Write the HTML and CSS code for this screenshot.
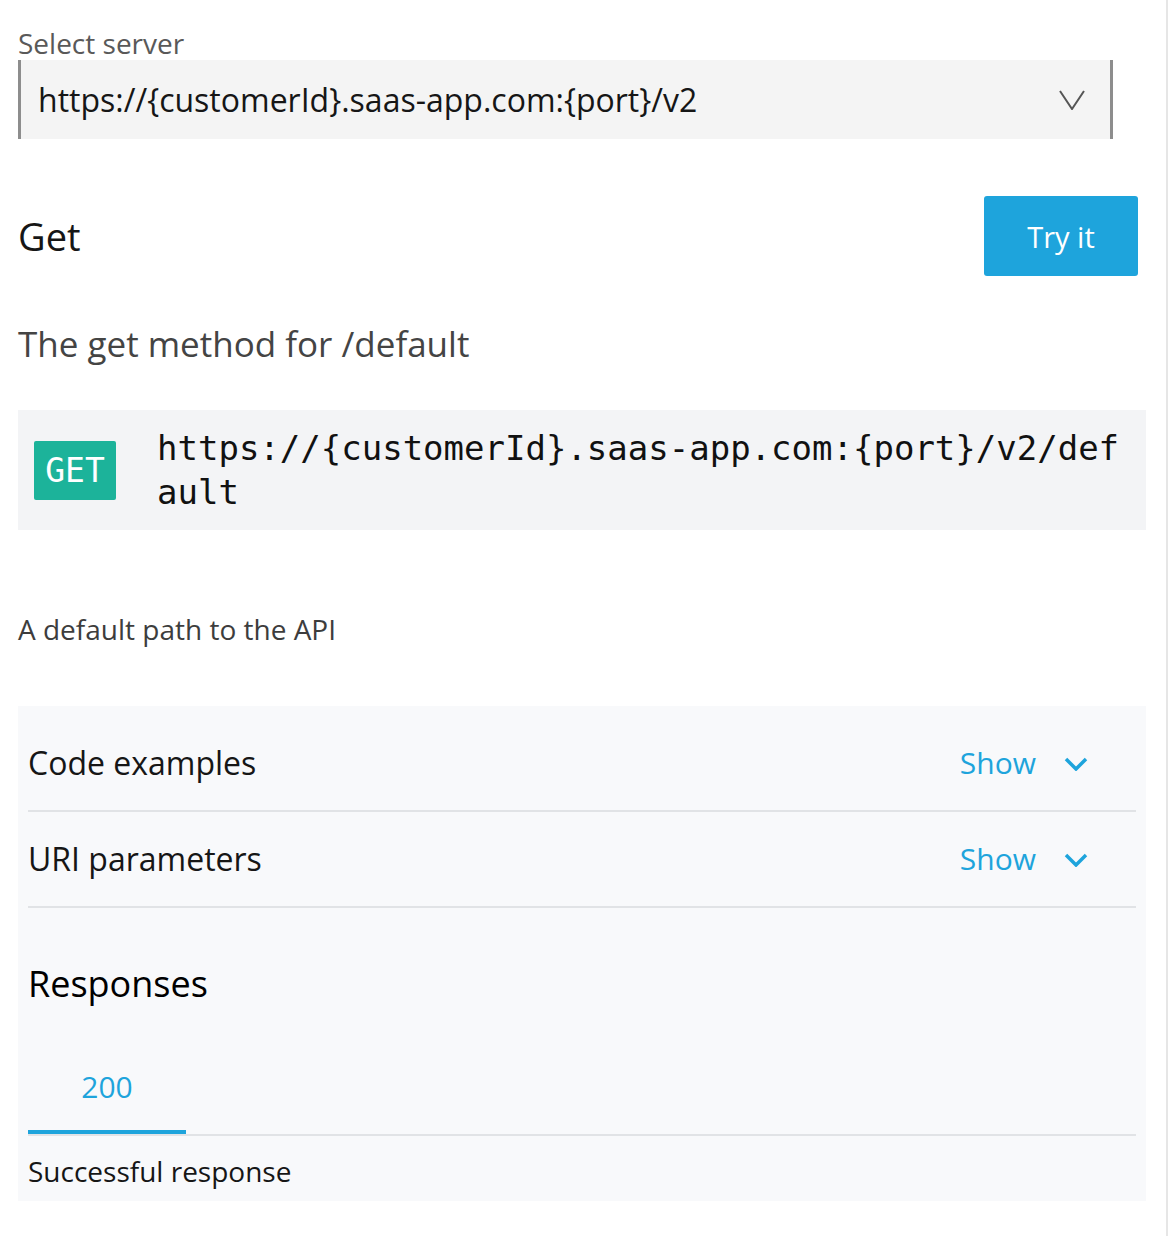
FILE: index.html
```html
<!DOCTYPE html>
<html lang="en">
<head>
<meta charset="utf-8">
<title>Get /default</title>
<link rel="stylesheet" href="styles.css">
</head>
<body>
<div class="page">
  <label class="sel-label">Select server</label>
  <div class="select">
    <span class="select-value">https://{customerId}.saas-app.com:{port}/v2</span>
    <svg class="select-chevron" width="26" height="20" viewBox="0 0 26 20" aria-hidden="true"><path d="M1 1 L13 19 L25 1" fill="none" stroke="#555" stroke-width="2"/></svg>
  </div>

  <div class="head">
    <h1 class="title">Get</h1>
    <button class="try">Try it</button>
  </div>

  <p class="summary">The get method for /default</p>

  <div class="endpoint">
    <span class="badge">GET</span>
    <code class="url">https://{customerId}.saas-app.com:{port}/v2/default</code>
  </div>

  <p class="desc">A default path to the API</p>

  <section class="panel">
    <div class="row">
      <span class="row-title">Code examples</span>
      <span class="toggle">Show <svg class="toggle-chevron" width="24" height="14" viewBox="0 0 24 14" aria-hidden="true"><path d="M2 2 L12 12 L22 2" fill="none" stroke="#1ea4dc" stroke-width="3.5"/></svg></span>
    </div>
    <div class="row">
      <span class="row-title">URI parameters</span>
      <span class="toggle">Show <svg class="toggle-chevron" width="24" height="14" viewBox="0 0 24 14" aria-hidden="true"><path d="M2 2 L12 12 L22 2" fill="none" stroke="#1ea4dc" stroke-width="3.5"/></svg></span>
    </div>
    <h2 class="resp-title">Responses</h2>
    <div class="tabs">
      <div class="tab active">200</div>
    </div>
    <p class="resp-desc">Successful response</p>
  </section>
</div>
</body>
</html>
```

FILE: styles.css
```css
* { box-sizing: border-box; }

html, body {
  margin: 0;
  padding: 0;
  background: #fff;
}

body {
  font-family: "Open Sans", "Noto Sans", sans-serif;
  color: #161616;
}

.page {
  width: 1168px;
  min-height: 1236px;
  padding: 29px 20px 0 18px;
  border-right: 2px solid #e6e6e6;
}

.sel-label {
  display: block;
  font-size: 28px;
  line-height: 28px;
  color: #595959;
  margin-bottom: 3px;
}

.select {
  width: 1095px;
  height: 79px;
  display: flex;
  align-items: center;
  justify-content: space-between;
  background: #f4f4f4;
  border-left: 3px solid #8d8d8d;
  border-right: 3px solid #8d8d8d;
  padding: 0 25px 0 17px;
}

.select-value {
  font-size: 32px;
  line-height: 40px;
  color: #161616;
}

.select-chevron { display: block; }

.head {
  margin-top: 57px;
  display: flex;
  align-items: center;
  justify-content: space-between;
  padding-right: 8px;
}

.title {
  margin: 0;
  font-size: 38px;
  font-weight: 400;
  line-height: 50px;
  color: #161616;
}

.try {
  width: 154px;
  height: 80px;
  border: none;
  border-radius: 3px;
  background: #1ea4dc;
  color: #fff;
  font-family: "Open Sans", "Noto Sans", sans-serif;
  font-size: 29px;
  padding: 0;
}

.summary {
  margin: 45px 0 0;
  font-size: 35px;
  line-height: 46px;
  color: #444;
}

.endpoint {
  margin-top: 43px;
  background: #f3f4f6;
  display: flex;
  align-items: center;
  padding: 16px;
}

.badge {
  flex: none;
  width: 82px;
  height: 59px;
  display: flex;
  align-items: center;
  justify-content: center;
  background: #1cb39a;
  color: #fff;
  border-radius: 2px;
  font-family: "DejaVu Sans Mono", "Liberation Mono", monospace;
  font-size: 33px;
  margin-right: 41px;
}

.url {
  font-family: "DejaVu Sans Mono", "Liberation Mono", monospace;
  font-size: 34px;
  line-height: 44px;
  color: #111;
  word-break: break-all;
}

.desc {
  margin: 80px 0 0;
  font-size: 28px;
  line-height: 38px;
  color: #3d3d3d;
}

.panel {
  margin-top: 58px;
  background: #f8f9fb;
  padding: 10px 10px 11px;
}

.row {
  height: 96px;
  display: flex;
  align-items: center;
  justify-content: space-between;
  border-bottom: 2px solid #e1e3e6;
  padding-right: 48px;
}

.row-title {
  font-size: 32px;
  line-height: 44px;
  color: #161616;
}

.toggle {
  display: flex;
  align-items: center;
  gap: 28px;
  font-size: 30px;
  line-height: 40px;
  color: #1ea4dc;
}

.toggle-chevron { display: block; margin-top: 2px; }

.resp-title {
  margin: 54px 0 0;
  font-size: 36px;
  font-weight: 400;
  line-height: 44px;
  color: #000;
}

.tabs {
  margin-top: 38px;
  display: flex;
  border-bottom: 2px solid #e1e3e6;
}

.tab {
  width: 158px;
  text-align: center;
  font-size: 30px;
  line-height: 38px;
  padding: 24px 0 24px;
  color: #1ea4dc;
}

.tab.active {
  border-bottom: 4px solid #1ea4dc;
}

.resp-desc {
  margin: 16px 0 0;
  font-size: 28px;
  line-height: 38px;
  color: #161616;
}
```
